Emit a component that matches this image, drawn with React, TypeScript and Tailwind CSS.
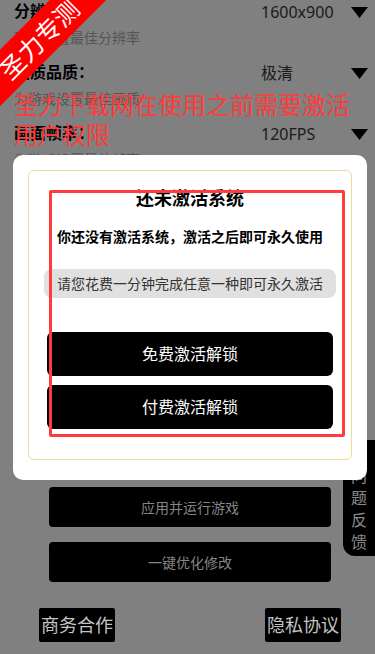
import React from "react";

const font = { fontFamily: '"Noto Sans", "Noto Sans CJK SC", sans-serif' };

const settings = [
    { label: "分辨率：", hint: "建议设置最佳分辨率", value: "1600x900" },
    { label: "画质品质：", hint: "为游戏设置最佳画质", value: "极清" },
    { label: "画面帧率：", hint: "为游戏设置最佳帧率", value: "120FPS" },
];

const Caret = () => (
    <svg width="17" height="11" viewBox="0 0 17 11" className="shrink-0">
        <path d="M0 0 H17 L8.5 11 Z" fill="#000" />
    </svg>
);

export default function App() {
    return (
        <div className="relative w-[375px] h-[654px] overflow-hidden bg-[#808080] text-black" style={font}>

            {/* --- PAGE UNDER THE OVERLAY --- */}
            <div className="flex flex-col pl-[14px] pr-[7px]">
                {settings.map((s) => (
                    <div key={s.label} className="flex h-[61px] items-start justify-between">
                        <div className="flex flex-col">
                            <span className="text-[16px] font-bold leading-[22px]">{s.label}</span>
                            <span className="mt-[6px] text-[14px] leading-[20px] text-[#555]">{s.hint}</span>
                        </div>
                        <div className="flex items-center gap-[20px] pt-[1px]">
                            <span className="w-[70px] text-[16px] leading-[22px] text-[#1a1a1a]">{s.value}</span>
                            <Caret />
                        </div>
                    </div>
                ))}
            </div>

            <div className="mt-[304px] flex flex-col gap-[15px] pl-[49px] pr-[44px]">
                <div className="flex h-[40px] items-center justify-center rounded-[4px] bg-black text-[14px] text-[#858585]">
                    应用并运行游戏
                </div>
                <div className="flex h-[40px] items-center justify-center rounded-[4px] bg-black text-[14px] text-[#858585]">
                    一键优化修改
                </div>
            </div>

            <div className="mt-[26px] flex justify-between pl-[39px] pr-[34px]">
                <div className="flex h-[34px] w-[76px] items-center justify-center rounded-[2px] bg-black text-[18px] text-[#c4c4c4]">
                    商务合作
                </div>
                <div className="flex h-[34px] w-[76px] items-center justify-center rounded-[2px] bg-black text-[18px] text-[#c4c4c4]">
                    隐私协议
                </div>
            </div>

            {/* side feedback tab */}
            <div className="absolute right-0 top-[440px] flex w-[32px] flex-col items-center rounded-bl-[12px] bg-black pb-[3px] pt-[25px] text-[16px] leading-[22px] text-[#8a8a8a]">
                <span>问</span>
                <span>题</span>
                <span>反</span>
                <span>馈</span>
            </div>

            {/* --- ACTIVATION DIALOG --- */}
            <div className="absolute left-[13px] top-[155px] w-[354px] h-[325px] rounded-[10px] bg-white pt-[15px] px-[15px] pb-[20px]">
                <div className="flex h-full flex-col items-center rounded-[6px] border border-[#ecdc98] pt-[16px]">
                    <div className="text-[18px] font-bold leading-[22px]">还未激活系统</div>
                    <div className="mt-[18px] text-[14px] font-bold leading-[20px]">你还没有激活系统，激活之后即可永久使用</div>
                    <div className="mt-[22px] flex h-[29px] w-[292px] items-center justify-center rounded-[8px] bg-[#e0e0e0] text-[14px] text-[#333]">
                        请您花费一分钟完成任意一种即可永久激活
                    </div>
                    <div className="mt-[34px] flex w-[286px] flex-col gap-[9px]">
                        <div className="flex h-[44px] items-center justify-center rounded-[6px] bg-black text-[16px] text-white">
                            免费激活解锁
                        </div>
                        <div className="flex h-[44px] items-center justify-center rounded-[6px] bg-black text-[16px] text-white">
                            付费激活解锁
                        </div>
                    </div>
                </div>
            </div>

            {/* red frame overlay */}
            <div className="pointer-events-none absolute left-[49px] top-[190px] h-[247px] w-[296px] rounded-[2px] border-[3px] border-[#ff3b3b]" />

            {/* red notice text */}
            <div className="pointer-events-none absolute left-[14px] top-[90px] w-[345px] text-[24px] leading-[30px] text-[#ff3b3b]">
                圣力下载网在使用之前需要激活用户权限
            </div>

            {/* corner ribbon */}
            <div className="absolute left-[-61px] top-[19px] flex h-[40px] w-[200px] -rotate-45 items-center justify-center bg-[#ff0000] text-[25px] leading-none text-white">
                圣力专测
            </div>
        </div>
    );
}
